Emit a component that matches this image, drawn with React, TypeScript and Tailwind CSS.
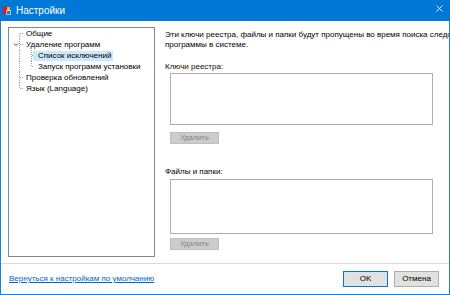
import React from "react";

const font = "font-['Segoe_UI','Liberation_Sans',Arial,sans-serif]";

// dotted tree connector, drawn per row
function Connector({ kind, first, last }: { kind: "root" | "child"; first?: boolean; last?: boolean }) {
  const dot = { stroke: "#a0a0a0", strokeWidth: 1, strokeDasharray: "1 1" };
  if (kind === "root") {
    return (
      <svg width="14" height="11" className="shrink-0">
        <line x1="9.5" y1={first ? 5.5 : 0} x2="9.5" y2={last ? 5.5 : 11} {...dot} />
        <line x1="10" y1="5.5" x2="14" y2="5.5" {...dot} />
      </svg>
    );
  }
  return (
    <svg width="23" height="11" className="shrink-0">
      <line x1="9.5" y1="0" x2="9.5" y2="11" {...dot} />
      <line x1="21.5" y1="0" x2="21.5" y2={last ? 5.5 : 11} {...dot} />
      <line x1="22" y1="5.5" x2="23" y2="5.5" {...dot} />
    </svg>
  );
}

function ExpandedConnector() {
  const dot = { stroke: "#a0a0a0", strokeWidth: 1, strokeDasharray: "1 1" };
  return (
    <svg width="14" height="11" className="shrink-0">
      <line x1="9.5" y1="0" x2="9.5" y2="11" {...dot} />
      <line x1="10" y1="5.5" x2="14" y2="5.5" {...dot} />
      <polyline points="4,4.5 6,6.5 8,4.5" fill="none" stroke="#404040" strokeWidth="1" />
    </svg>
  );
}

function TreePanel() {
  return (
    <div className="ml-[7px] mt-[6px] mb-[6px] w-[147px] border border-[#828790] bg-white text-[8px] text-[#000] leading-[11px]">
      <div className="pl-[1px]">
        <div className="flex h-[11px] items-center">
          <Connector kind="root" first />
          <span className="pl-[2px] whitespace-nowrap">Общие</span>
        </div>
        <div className="flex h-[11px] items-center">
          <ExpandedConnector />
          <span className="pl-[2px] whitespace-nowrap">Удаление программ</span>
        </div>
        <div className="flex h-[11px] items-center">
          <Connector kind="child" />
          <span className="h-[10px] pl-[5px] pr-[2px] bg-[#cce8ff] whitespace-nowrap leading-[10px]">
            Список исключений
          </span>
        </div>
        <div className="flex h-[11px] items-center">
          <Connector kind="child" last />
          <span className="pl-[5px] whitespace-nowrap">Запуск программ установки</span>
        </div>
        <div className="flex h-[11px] items-center">
          <Connector kind="root" />
          <span className="pl-[2px] whitespace-nowrap">Проверка обновлений</span>
        </div>
        <div className="flex h-[11px] items-center">
          <Connector kind="root" last />
          <span className="pl-[2px] whitespace-nowrap">Язык (Language)</span>
        </div>
      </div>
    </div>
  );
}

function DisabledButton() {
  return (
    <div className="ml-[5px] flex h-[12px] w-[49px] items-center justify-center border border-[#bfbfbf] bg-[#cccccc] text-[7.5px] text-[#838383]">
      Удалить
    </div>
  );
}

export default function App() {
  return (
    <div className={`${font} flex h-[295px] w-[450px] flex-col overflow-hidden bg-white text-[8px]`}>
      {/* Title bar */}
      <div className="flex h-[21px] shrink-0 items-center bg-[#0078d7] pl-[3px] pr-[7px] text-white">
        <div className="grid h-[7px] w-[7px] grid-cols-2 grid-rows-2">
          <span className="bg-[#e81123]" />
          <span className="bg-[#ffb900]" />
          <span className="bg-[#e81123]" />
          <span className="bg-[#0c7bd9] outline outline-1 outline-white/60" />
        </div>
        <span className="ml-[6px] text-[10px]">Настройки</span>
        <svg width="7" height="7" className="ml-auto mb-[4px]">
          <line x1="0.5" y1="0.5" x2="6.5" y2="6.5" stroke="white" strokeWidth="1" />
          <line x1="6.5" y1="0.5" x2="0.5" y2="6.5" stroke="white" strokeWidth="1" />
        </svg>
      </div>

      <div className="flex flex-1 flex-col border-x border-b border-[#1883d7]">
        {/* Main */}
        <div className="flex h-[242px] shrink-0">
          <TreePanel />
          <div className="flex min-w-0 flex-1 flex-col pl-[10px] pt-[9px] text-[8px] leading-[10px] text-black">
            <p className="overflow-hidden whitespace-nowrap">
              Эти ключи реестра, файлы и папки будут пропущены во время поиска следов
            </p>
            <p className="whitespace-nowrap">программы в системе.</p>
            <p className="mt-[12px] text-[#1a0a00]">Ключи реестра:</p>
            <div className="ml-[5px] mt-[1px] h-[52px] w-[263px] border border-[#abadb3] bg-white" />
            <div className="mt-[7px]">
              <DisabledButton />
            </div>
            <p className="mt-[23px]">Файлы и папки:</p>
            <div className="ml-[5px] mt-[2px] h-[55px] w-[263px] border border-[#abadb3] bg-white" />
            <div className="mt-[4px]">
              <DisabledButton />
            </div>
          </div>
        </div>

        {/* Footer */}
        <div className="flex flex-1 items-center border-t border-[#dadada] pl-[8px] pr-[10px]">
          <a className="text-[8px] text-[#0066cc] underline">Вернуться к настройкам по умолчанию</a>
          <div className="ml-auto flex gap-[6px]">
            <button className="h-[16px] w-[45px] border border-[#0078d7] bg-[#e1e1e1] text-[8px] text-black">
              OK
            </button>
            <button className="h-[16px] w-[45px] border border-[#adadad] bg-[#e1e1e1] text-[8px] text-black">
              Отмена
            </button>
          </div>
        </div>
      </div>
    </div>
  );
}
